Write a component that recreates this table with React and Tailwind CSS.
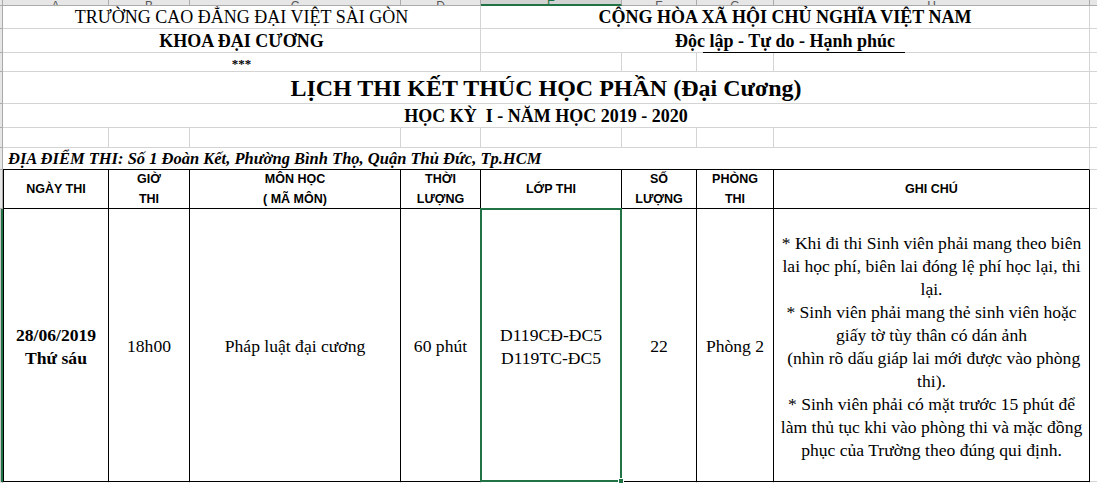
import React from "react";

const serif = "font-['Liberation_Serif','Times_New_Roman',serif]";
const sans = "font-['Liberation_Sans',Arial,sans-serif]";

// column widths A..H (each includes its right border)
const COLS = [
  { key: "A", w: "w-[106px]" },
  { key: "B", w: "w-[81px]" },
  { key: "C", w: "w-[211px]" },
  { key: "D", w: "w-[80px]" },
  { key: "E", w: "w-[141px]" },
  { key: "F", w: "w-[75px]" },
  { key: "G", w: "w-[77px]" },
  { key: "H", w: "w-[316px]" },
];

function RowHead({ selected }) {
  if (selected) {
    return <div className="w-[3px] shrink-0 bg-[#c6c6c6] border-r-2 border-[#217346]" />;
  }
  return <div className="w-[3px] shrink-0 bg-[#e6e6e6] border-r border-b border-[#ababab]" />;
}

function Gap() {
  return <div className="flex-1 border-b border-[#d4d4d4]" />;
}

const NOTES = [
  "* Khi đi thi Sinh viên phải mang theo biên",
  "lai học phí, biên lai đóng lệ phí học lại, thi",
  "lại.",
  "* Sinh viên phải mang thẻ sinh viên hoặc",
  "giấy tờ tùy thân có dán ảnh",
  " (nhìn rõ dấu giáp lai mới được vào phòng",
  "thi).",
  "* Sinh viên phải có mặt trước 15 phút để",
  "làm thủ tục khi vào phòng thi và mặc đồng",
  "phục của Trường theo đúng qui định.",
];

export default function App() {
  const cell = "shrink-0 border-r border-b border-[#d4d4d4]";
  const tcell = "shrink-0 border-r border-b border-black flex items-center justify-center text-center";

  return (
    <div className={"w-[1097px] h-[483px] overflow-hidden bg-white text-black " + serif}>
      {/* column header strip (mostly cut off) */}
      <div className="flex h-[6px]">
        <div className="w-[3px] shrink-0 bg-[#e6e6e6] border-r border-b border-[#ababab]" />
        {COLS.map(c => (
          <div
            key={c.key}
            className={
              c.w +
              " shrink-0 flex justify-center items-end overflow-hidden border-r " +
              (c.key === "E"
                ? "bg-[#d2d2d2] border-b-2 border-b-[#217346] border-r-[#ababab]"
                : "bg-[#e6e6e6] border-b border-[#ababab]")
            }
          >
            <span
              className={
                "text-[12px] leading-none mb-[-7px] " +
                sans +
                (c.key === "E" ? " text-[#217346]" : " text-[#555]")
              }
            >
              {c.key}
            </span>
          </div>
        ))}
        <div className="flex-1 bg-[#e6e6e6] border-b border-[#ababab]" />
      </div>

      {/* row 1 */}
      <div className="flex h-[23px]">
        <RowHead />
        <div className={cell + " w-[478px] flex items-end justify-center text-[18px] leading-[21px]"}>
          TRƯỜNG CAO ĐẲNG ĐẠI VIỆT SÀI GÒN
        </div>
        <div className={cell + " w-[609px] flex items-end justify-center text-[18px] leading-[21px] font-bold"}>
          CỘNG HÒA XÃ HỘI CHỦ NGHĨA VIỆT NAM
        </div>
        <Gap />
      </div>

      {/* row 2 */}
      <div className="flex h-[24px]">
        <RowHead />
        <div className={cell + " w-[478px] flex items-end justify-center text-[18px] leading-[21px] font-bold"}>
          KHOA ĐẠI CƯƠNG
        </div>
        <div className={cell + " relative w-[609px] flex items-end justify-center text-[18px] leading-[21px] font-bold"}>
          Độc lập - Tự do - Hạnh phúc
          <div className="absolute left-[222px] -bottom-px w-[202px] h-px bg-black" />
        </div>
        <Gap />
      </div>

      {/* row 3 */}
      <div className="flex h-[19px]">
        <RowHead />
        <div className={cell + " w-[478px] flex items-center justify-center text-[13px] font-bold leading-none pt-[2px]"}>
          ***
        </div>
        <div className={cell + " w-[141px]"} />
        <div className={cell + " w-[75px]"} />
        <div className={cell + " w-[77px]"} />
        <div className={cell + " w-[316px]"} />
        <Gap />
      </div>

      {/* row 4 title */}
      <div className="flex h-[32px]">
        <RowHead />
        <div className={cell + " w-[1087px] flex items-end justify-center text-[24px] leading-[30px] font-bold"}>
          LỊCH THI KẾT THÚC HỌC PHẦN (Đại Cương)
        </div>
        <Gap />
      </div>

      {/* row 5 subtitle */}
      <div className="flex h-[24px]">
        <RowHead />
        <div className={cell + " w-[1087px] flex items-end justify-center text-[18px] leading-[22px] font-bold whitespace-pre"}>
          {"HỌC KỲ  I - NĂM HỌC 2019 - 2020"}
        </div>
        <Gap />
      </div>

      {/* row 6 empty */}
      <div className="flex h-[20px]">
        <RowHead />
        {COLS.map(c => (
          <div key={c.key} className={cell + " " + c.w} />
        ))}
        <Gap />
      </div>

      {/* row 7 location */}
      <div className="flex h-[22px]">
        <RowHead />
        <div className="shrink-0 w-[1087px] border-r border-r-[#d4d4d4] border-b border-b-black flex items-end pl-[5px] text-[16.5px] leading-[21px] font-bold italic whitespace-nowrap">
          ĐỊA ĐIỂM THI: Số 1 Đoàn Kết, Phường Bình Thọ, Quận Thủ Đức, Tp.HCM
        </div>
        <Gap />
      </div>

      {/* table header */}
      <div className={"flex h-[39px] text-[12.5px] leading-[20px] font-bold " + sans}>
        <RowHead />
        <div className={tcell + " w-[106px] border-l"}>NGÀY THI</div>
        <div className={tcell + " w-[81px]"}>GIỜ<br />THI</div>
        <div className={tcell + " w-[211px]"}>MÔN HỌC<br />( MÃ MÔN)</div>
        <div className={tcell + " w-[80px]"}>THỜI<br />LƯỢNG</div>
        <div className={tcell + " w-[141px]"}>LỚP THI</div>
        <div className={tcell + " w-[75px]"}>SỐ<br />LƯỢNG</div>
        <div className={tcell + " w-[77px]"}>PHÒNG<br />THI</div>
        <div className={tcell + " w-[316px]"}>GHI CHÚ</div>
        <Gap />
      </div>

      {/* data row */}
      <div className="flex h-[273px] text-[17.6px] leading-[23px]">
        <RowHead selected />
        <div className={tcell + " w-[106px] border-l font-bold pt-[3px]"}>28/06/2019<br />Thứ sáu</div>
        <div className={tcell + " w-[81px] pt-[3px]"}>18h00</div>
        <div className={tcell + " w-[211px] pt-[3px]"}>Pháp luật đại cương</div>
        <div className={tcell + " w-[80px] pt-[3px]"}>60 phút</div>
        <div className={tcell + " relative w-[141px] pt-[3px]"}>
          <span>D119CĐ-ĐC5<br />D119TC-ĐC5</span>
          <div className="absolute -left-px -top-px -right-px -bottom-px border-2 border-[#217346]" />
          <div className="absolute -right-[3px] -bottom-[3px] w-[6px] h-[6px] bg-[#217346] border border-white" />
        </div>
        <div className={tcell + " w-[75px] pt-[3px]"}>22</div>
        <div className={tcell + " w-[77px] pt-[3px]"}>Phòng 2</div>
        <div className={tcell + " w-[316px] flex-col pt-[3px]"}>
          {NOTES.map((l, i) => (
            <div key={i} className="whitespace-pre">{l}</div>
          ))}
        </div>
        <Gap />
      </div>

      <div className="flex h-[10px]">
        <RowHead />
        {COLS.map(c => (
          <div key={c.key} className={cell + " " + c.w} />
        ))}
        <Gap />
      </div>
    </div>
  );
}
